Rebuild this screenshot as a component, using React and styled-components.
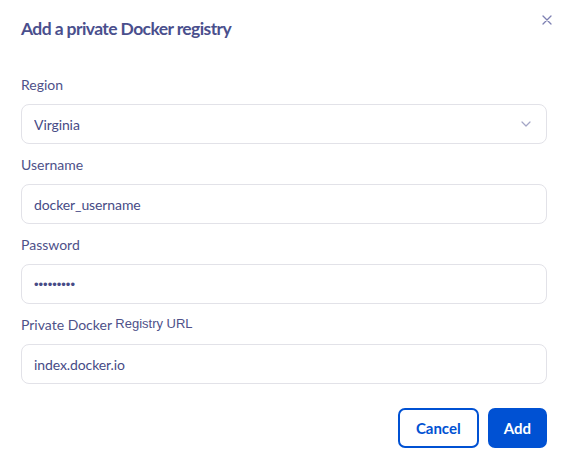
import React from "react";
import styled, { createGlobalStyle } from "styled-components";

const Global = createGlobalStyle`
  html, body { margin: 0; padding: 0; background: #ffffff; }
  body { font-family: "Lato", "Noto Sans", sans-serif; -webkit-font-smoothing: antialiased; }
  * { box-sizing: border-box; }
`;

const Dialog = styled.div`
  width: 567px;
  height: 467px;
  padding: 17px 20px 0 21px;
  background: #fff;
  display: flex;
  flex-direction: column;
`;

const Header = styled.div`
  display: flex;
  justify-content: space-between;
  align-items: flex-start;
  height: 24px;
  margin-bottom: 34px;
`;

const Title = styled.h2`
  margin: 0;
  font-size: 17.5px;
  line-height: 24px;
  font-weight: 700;
  color: #4a4f8d;
  letter-spacing: -0.6px;
`;

const CloseButton = styled.button`
  border: 0;
  background: none;
  padding: 0;
  margin: -2px -5px 0 0;
  width: 10px;
  height: 10px;
  display: flex;
  cursor: pointer;
`;

const Form = styled.div`
  display: flex;
  flex-direction: column;
  gap: 11px;
`;

const Field = styled.div`
  display: flex;
  flex-direction: column;
`;

const Label = styled.label`
  font-size: 14px;
  line-height: 20px;
  height: 20px;
  color: #4e5189;
  margin-bottom: 9px;
`;

const Plain = styled.span`
  font-family: "Liberation Sans", Arial, sans-serif;
  font-size: 13px;
  line-height: 0;
  color: #4e5189;
  position: relative;
  top: -2px;
`;

const Box = styled.div`
  position: relative;
  height: 40px;
  border: 1px solid #e2e2e8;
  border-radius: 8px;
  display: flex;
  align-items: center;
  padding: 0 12px;
`;

const TextInput = styled.input`
  border: 0;
  outline: none;
  background: transparent;
  width: 100%;
  font-family: ${(p) => (p.$dots ? '"Liberation Sans", Arial, sans-serif' : "inherit")};
  font-size: ${(p) => (p.$dots ? "13px" : "14px")};
  letter-spacing: ${(p) => (p.$dots ? "0" : "-0.1px")};
  color: #474b86;
  padding: 0;
`;

const Chevron = styled.svg`
  position: absolute;
  right: 15px;
  top: 50%;
  transform: translateY(-50%);
`;

const Footer = styled.div`
  display: flex;
  justify-content: flex-end;
  gap: 9px;
  margin-top: 24px;
`;

const Button = styled.button`
  height: 40px;
  padding: 0 ${(p) => (p.$primary ? "14px" : "16px")};
  border-radius: 7px;
  border: 2px solid #0051d3;
  background: ${(p) => (p.$primary ? "#0051d3" : "#ffffff")};
  color: ${(p) => (p.$primary ? "#ffffff" : "#0051d3")};
  font-family: inherit;
  font-size: 15px;
  font-weight: 700;
  cursor: pointer;
`;

export default function App() {
  return (
    <>
      <Global />
      <Dialog>
        <Header>
          <Title>Add a private Docker registry</Title>
          <CloseButton aria-label="Close">
            <svg width="10" height="10" viewBox="0 0 10 10">
              <path d="M1 1 L9 9 M9 1 L1 9" stroke="#7d80b2" strokeWidth="1.3" strokeLinecap="round" />
            </svg>
          </CloseButton>
        </Header>
        <Form>
          <Field>
            <Label>Region</Label>
            <Box>
              <TextInput readOnly value="Virginia" />
              <Chevron width="10" height="6" viewBox="0 0 10 6">
                <path d="M1 1 L5 5 L9 1" fill="none" stroke="#a3a5c6" strokeWidth="1.2" strokeLinecap="round" strokeLinejoin="round" />
              </Chevron>
            </Box>
          </Field>
          <Field>
            <Label>Username</Label>
            <Box>
              <TextInput readOnly value="docker_username" />
            </Box>
          </Field>
          <Field>
            <Label>Password</Label>
            <Box>
              <TextInput $dots readOnly value="•••••••••" />
            </Box>
          </Field>
          <Field>
            <Label>
              Private Docker <Plain>Registry URL</Plain>
            </Label>
            <Box>
              <TextInput readOnly value="index.docker.io" />
            </Box>
          </Field>
        </Form>
        <Footer>
          <Button>Cancel</Button>
          <Button $primary>Add</Button>
        </Footer>
      </Dialog>
    </>
  );
}
